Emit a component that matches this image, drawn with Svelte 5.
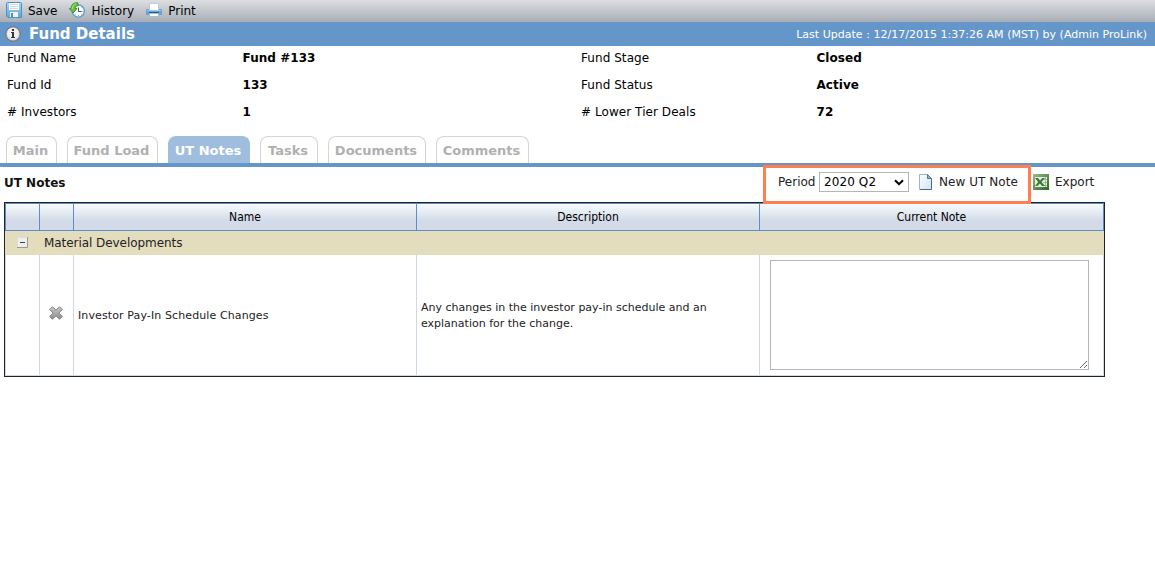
<script lang="ts">
  interface Field {
    label: string
    value: string
  }

  const fields: Field[][] = [
    [
      { label: 'Fund Name', value: 'Fund #133' },
      { label: 'Fund Stage', value: 'Closed' },
    ],
    [
      { label: 'Fund Id', value: '133' },
      { label: 'Fund Status', value: 'Active' },
    ],
    [
      { label: '# Investors', value: '1' },
      { label: '# Lower Tier Deals', value: '72' },
    ],
  ]

  const tabs = [
    { name: 'Main', width: 51 },
    { name: 'Fund Load', width: 91 },
    { name: 'UT Notes', width: 82 },
    { name: 'Tasks', width: 58 },
    { name: 'Documents', width: 98 },
    { name: 'Comments', width: 93 },
  ]

  let activeTab = $state('UT Notes')
  let period = $state('2020 Q2')
  let note = $state('')
  let expanded = $state(true)
</script>

<div class="toolbar">
  <button class="tool save">
    <svg width="16" height="16" viewBox="0 0 16 16">
      <defs>
        <linearGradient id="disk" x1="0" y1="0" x2="0" y2="1">
          <stop offset="0" stop-color="#a9d8f3" />
          <stop offset="1" stop-color="#5ba7da" />
        </linearGradient>
      </defs>
      <path d="M.5 1.500Q.5.5 1.500.5H14.500Q15.500.5 15.500 1.500V15.500H2L.5 14Z" fill="url(#disk)" stroke="#4b94c8" />
      <path d="M3 1H13V8H3Z" fill="#fbfdfe" />
      <path d="M4 2.500H12M4 4.500H12M4 6.500H12" stroke="#d3dbe0" />
      <path d="M4 10H12V15H4Z" fill="#eef4f8" />
      <path d="M5 11H7V15H5Z" fill="#5d8fb3" />
    </svg>
    <span>Save</span>
  </button>
  <button class="tool history">
    <svg width="16" height="16" viewBox="0 0 16 16">
      <circle cx="9.300" cy="9" r="6.100" fill="#fafcfd" stroke="#5b9fd0" stroke-width="1.300" />
      <path d="M9.500 5.500V9.500H12.500" fill="none" stroke="#3c5566" />
      <path d="M9.500 13V14M13.300 9.500H14.300M12.500 6L13 5.500M12 12L12.500 12.500M6 13L6.500 12.500" stroke="#7b98aa" />
      <path d="M8.500 .5Q2.200.7 2 6.500H.3L4.300 11L8 6.500H6Q6 3.600 9.500 3.500Z" fill="#69c23f" stroke="#2d8a25" stroke-width=".8" />
      <path d="M3.200 7Q3.200 2.600 7.300 1.700" fill="none" stroke="#aee783" />
    </svg>
    <span>History</span>
  </button>
  <button class="tool print">
    <svg width="16" height="16" viewBox="0 0 16 16">
      <path d="M3.500 1.500H12.500V8.500H3.500Z" fill="#fff" stroke="#bccdd9" />
      <path d="M1 7H3V8H13V7H15Q16 7 16 8V12Q16 13 15 13H1Q0 13 0 12V8Q0 7 1 7Z" fill="#68a5d4" />
      <path d="M1 8.500H15" stroke="#9fcaea" />
      <path d="M3 10.500H13" stroke="#2e5d83" />
      <path d="M3.500 11.500H12.500V14.500H3.500Z" fill="#f8fbfd" stroke="#9bbdd6" />
    </svg>
    <span>Print</span>
  </button>
</div>

<header class="title-bar">
  <svg class="info" width="16" height="16" viewBox="0 0 16 16">
    <circle cx="8" cy="8" r="7.200" fill="#d4d4d4" stroke="#6e6e6e" stroke-width="1" />
    <circle cx="8" cy="7.500" r="5.700" fill="#eee" />
    <path d="M7 3H9V5H7ZM6 6H9V11H10V12H6V11H7V7H6Z" fill="#333" />
  </svg>
  <h1>Fund Details</h1>
  <span class="updated">Last Update : 12/17/2015 1:37:26 AM (MST) by (Admin ProLink)</span>
</header>

<div class="fields">
  {#each fields as row}
    {#each row as field}
      <span class="label">{field.label}</span>
      <strong>{field.value}</strong>
    {/each}
  {/each}
</div>

<nav class="tabs">
  {#each tabs as tab}
    <button
      class="tab"
      class:active={tab.name === activeTab}
      style="width: {tab.width}px"
      onclick={() => (activeTab = tab.name)}
    >
      {tab.name}
    </button>
  {/each}
</nav>

<section>
  <div class="section-head">
    <h2>UT Notes</h2>
    <div class="highlight">
      <label for="period">Period</label>
      <div class="select-wrap">
        <select id="period" bind:value={period}>
          <option>2020 Q2</option>
          <option>2020 Q1</option>
        </select>
        <svg class="chevron" width="10" height="7" viewBox="0 0 10 7">
          <path d="M1 1.300L5 5.200L9 1.300" fill="none" stroke="#000" stroke-width="2" />
        </svg>
      </div>
      <button class="tool new">
        <svg width="13" height="16" viewBox="0 0 13 16">
          <defs>
            <linearGradient id="page" x1="0" y1="0" x2="1" y2="1">
              <stop offset="0" stop-color="#fff" />
              <stop offset="1" stop-color="#cfe4f0" />
            </linearGradient>
          </defs>
          <path d="M.5.5H8.500L12.500 4.500V15.500H.5Z" fill="url(#page)" stroke="#9fb4c4" />
          <path d="M8.500.5V4.500H12.500Z" fill="#8cb8d4" stroke="#517994" />
          <path d="M12.500 5V15.500H1" fill="none" stroke="#426f8d" />
        </svg>
        <span>New UT Note</span>
      </button>
    </div>
    <button class="tool export">
      <svg width="16" height="16" viewBox="0 0 16 16">
        <defs>
          <linearGradient id="sheet" x1="0" y1="0" x2="1" y2="1">
            <stop offset="0" stop-color="#9aba90" />
            <stop offset="1" stop-color="#286a22" />
          </linearGradient>
        </defs>
        <path d="M0 0H16V16H0Z" fill="url(#sheet)" />
        <path d="M2 3H14V13H2Z" fill="#e6efe2" />
        <path d="M10 5.500H14M10 8.500H14M10 11.500H14M12.500 3V13" stroke="#9dbd92" />
        <path d="M2 4H5L7 6.500L9.500 4H12L8.500 8L12 12H9L6.800 9.500L4.500 12H2L5.200 8Z" fill="#377b34" />
      </svg>
      <span>Export</span>
    </button>
  </div>

  <table>
    <colgroup>
      <col style="width: 35px" />
      <col style="width: 34px" />
      <col style="width: 343px" />
      <col style="width: 343px" />
      <col style="width: 344px" />
    </colgroup>
    <thead>
      <tr>
        <th></th>
        <th></th>
        <th>Name</th>
        <th>Description</th>
        <th>Current Note</th>
      </tr>
    </thead>
    <tbody>
      <tr class="group">
        <td>
          <button class="toggle" aria-label="Toggle group" onclick={() => (expanded = !expanded)}>
            <svg width="11" height="11" viewBox="0 0 11 11">
              <path d="M0 0H11V11H0Z" fill="#eee" />
              <path d="M.5 10V.5H10" fill="none" stroke="#ddd" />
              <path d="M10.500 0V10.500H0" fill="none" stroke="#999" />
              <path d="M3 5.500H8" stroke="#444" />
            </svg>
          </button>
        </td>
        <td colspan="4">Material Developments</td>
      </tr>
      {#if expanded}
        <tr class="item">
          <td></td>
          <td class="remove">
            <svg width="14" height="14" viewBox="0 0 14 14">
              <defs>
                <linearGradient id="cross" x1="0" y1="0" x2="0" y2="1">
                  <stop offset="0" stop-color="#c8c8c8" />
                  <stop offset="1" stop-color="#8c8c8c" />
                </linearGradient>
              </defs>
              <path
                d="M3.500.7L7 4.200L10.500.7L13.300 3.500L9.800 7L13.300 10.500L10.500 13.300L7 9.800L3.500 13.300L.7 10.500L4.200 7L.7 3.500Z"
                fill="url(#cross)"
                stroke="#808080"
                stroke-linejoin="round"
              />
            </svg>
          </td>
          <td><span class="name">Investor Pay-In Schedule Changes</span></td>
          <td><p>Any changes in the investor pay-in schedule and an explanation for the change.</p></td>
          <td class="note"><textarea aria-label="Current Note" bind:value={note}></textarea></td>
        </tr>
      {/if}
    </tbody>
  </table>
</section>

<style>
  :global(body) {
    margin: 0;
    background: #fff;
    color: #000;
    font: 12px/16px Verdana, 'DejaVu Sans', sans-serif;
  }

  button {
    border: 0;
    padding: 0;
    background: none;
    color: inherit;
    font: inherit;
    cursor: pointer;
  }

  svg {
    display: block;
    flex: none;
  }

  .toolbar {
    display: flex;
    box-sizing: border-box;
    height: 22px;
    padding: 2px 6px 0;
    background: linear-gradient(#dcdee1, #a8adb6);
  }

  .tool {
    display: flex;
    gap: 6px;
    height: 17px;
    white-space: nowrap;
  }

  .toolbar span {
    padding-top: 1px;
  }

  .history {
    margin-left: 12px;
  }

  .print {
    margin-left: 12px;
  }

  .title-bar {
    display: flex;
    align-items: center;
    box-sizing: border-box;
    height: 24px;
    padding: 0 8px 0 5px;
    background: #6496c9;
    color: #fff;
  }

  h1 {
    margin: 0 auto 0 8px;
    font-size: 15px;
    line-height: 24px;
  }

  .updated {
    padding-top: 1px;
    font-size: 11px;
    letter-spacing: 0.02px;
  }

  .fields {
    display: grid;
    grid-template-columns: 235px 339px 235px 1fr;
    grid-auto-rows: 27px;
    padding: 4px 0 0 7px;
    height: 86px;
  }

  .label {
    letter-spacing: 0.06px;
  }

  strong {
    padding-left: 0.5px;
    letter-spacing: 0.05px;
  }

  .tabs {
    display: flex;
    gap: 10px;
    height: 27px;
    padding-left: 6px;
    border-bottom: 4px solid #6496c9;
  }

  .tab {
    box-sizing: border-box;
    height: 27px;
    padding: 2px 2px 0 0;
    border: 1px solid #d5d5d5;
    border-bottom: 0;
    border-radius: 8px 8px 0 0;
    color: #b0b0b0;
    font-size: 13px;
    font-weight: bold;
    white-space: nowrap;
  }

  .tab.active {
    border-color: #9fbede;
    background: #9fbede;
    color: #fff;
  }

  .section-head {
    display: flex;
    height: 35px;
    padding-left: 4px;
  }

  h2 {
    width: 759px;
    margin: 8px 0 0;
    font-size: 12px;
    color: #111;
  }

  .highlight {
    position: relative;
    z-index: 1;
    display: flex;
    box-sizing: border-box;
    width: 268px;
    height: 39px;
    margin-top: -2px;
    padding: 6px 0 0 12px;
    border: 3px solid #ff7f50;
    color: #222;
  }

  label {
    width: 41px;
  }

  .select-wrap {
    position: relative;
    height: 20px;
    margin-top: -2px;
  }

  select {
    display: block;
    appearance: none;
    box-sizing: border-box;
    width: 90px;
    height: 20px;
    padding: 0 4px;
    border: 1px solid #b5b5b5;
    border-radius: 0;
    background: #fff;
    color: #000;
    font: inherit;
    letter-spacing: 0.1px;
  }

  .chevron {
    position: absolute;
    right: 5px;
    top: 7px;
    pointer-events: none;
  }

  .new {
    margin-left: 10px;
    gap: 7px;
    letter-spacing: 0.06px;
  }

  .export {
    margin: 7px 0 0 2px;
    color: #222;
  }

  table {
    width: 1101px;
    margin-left: 4px;
    border: 1px solid #222;
    border-spacing: 0;
    table-layout: fixed;
  }

  th,
  td {
    box-sizing: border-box;
    padding: 0;
  }

  th {
    height: 28px;
    border: solid #5f8dc8;
    border-width: 1px 1px 1px 0;
    background: linear-gradient(#f6fcfd, #d3dae8 65%, #d3dae8);
    font: 12px/14px Tahoma, 'DejaVu Sans Condensed', sans-serif;
  }

  th:first-child {
    border-left-width: 1px;
  }

  .group td {
    height: 24px;
    background: #e4ddbd;
    color: #222;
    letter-spacing: -0.06px;
  }

  .group td + td {
    padding-left: 4px;
  }

  .toggle {
    display: block;
    margin: -2px 0 0 12px;
  }

  .item td {
    height: 121px;
    border: solid #d0d7e5;
    border-width: 0 1px 1px 0;
    color: #222;
    font-size: 11px;
  }

  .item td:first-child {
    border-left-width: 1px;
  }

  .remove svg {
    margin: -5px 0 0 9px;
  }

  .name,
  p {
    display: block;
    width: 310px;
    margin: 0 0 0 4px;
    padding-top: 2px;
  }

  .name {
    letter-spacing: 0.11px;
  }

  textarea {
    display: block;
    box-sizing: border-box;
    width: 319px;
    height: 110px;
    margin: 0 0 0 10px;
    border: 1px solid #b5b5b5;
    outline: none;
  }
</style>
